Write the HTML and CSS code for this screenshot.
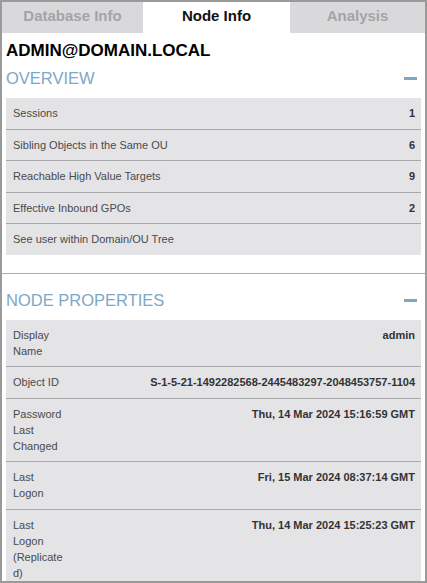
FILE: index.html
```html
<!DOCTYPE html>
<html lang="en">
<head>
  <meta charset="UTF-8" />
  <title>Node Info</title>
  <link rel="stylesheet" href="styles.css">
</head>
<body>
  <div class="panel">
    <div class="tabs">
      <div class="tab">Database Info</div>
      <div class="tab active">Node Info</div>
      <div class="tab">Analysis</div>
    </div>

    <div class="section first">
      <h1 class="node-name">ADMIN@DOMAIN.LOCAL</h1>
      <div class="section-head">
        <h2>OVERVIEW</h2>
        <span class="collapse"></span>
      </div>
      <div class="rows">
        <div class="row"><span>Sessions</span><b>1</b></div>
        <div class="row"><span>Sibling Objects in the Same OU</span><b>6</b></div>
        <div class="row"><span>Reachable High Value Targets</span><b>9</b></div>
        <div class="row"><span>Effective Inbound GPOs</span><b>2</b></div>
        <div class="row"><span>See user within Domain/OU Tree</span></div>
      </div>
    </div>

    <div class="section">
      <div class="section-head">
        <h2>NODE PROPERTIES</h2>
        <span class="collapse"></span>
      </div>
      <div class="rows">
        <div class="row prop"><span class="label">Display Name</span><b>admin</b></div>
        <div class="row prop"><span class="label">Object ID</span><b>S-1-5-21-1492282568-2445483297-2048453757-1104</b></div>
        <div class="row prop"><span class="label">Password Last Changed</span><b>Thu, 14 Mar 2024 15:16:59 GMT</b></div>
        <div class="row prop"><span class="label">Last Logon</span><b>Fri, 15 Mar 2024 08:37:14 GMT</b></div>
        <div class="row prop"><span class="label">Last Logon (Replicated)</span><b>Thu, 14 Mar 2024 15:25:23 GMT</b></div>
      </div>
    </div>
  </div>
</body>
</html>
```

FILE: styles.css
```css
body {
  margin: 0;
  font-family: 'Liberation Sans', Arial, sans-serif;
  background: #ffffff;
  color: #333333;
}

.panel {
  height: 583px;
  box-sizing: border-box;
  border: 2px solid #9a9a9a;
  overflow: hidden;
}

.tabs {
  display: grid;
  grid-template-columns: 141px 147px 1fr;
  height: 31px;
}

.tab {
  background-color: #d9d9db;
  color: #a4a4a7;
  font-weight: bold;
  font-size: 15px;
  display: flex;
  align-items: center;
  justify-content: center;
  padding-bottom: 4px;
}

.tab.active {
  background-color: #ffffff;
  color: #111111;
}

.section {
  padding: 17px 4px 0;
  border-top: 1px solid #ababab;
}

.section.first {
  padding: 8px 4px 18px;
  border-top: none;
}

.node-name {
  margin: 0 0 8px;
  font-size: 17px;
  color: #000000;
}

.section-head {
  display: flex;
  justify-content: space-between;
  align-items: center;
  margin-bottom: 10px;
}

.section-head h2 {
  margin: 0;
  font-size: 16.5px;
  font-weight: normal;
  color: #7ea7c6;
}

.collapse {
  width: 13px;
  height: 3px;
  margin-right: 4px;
  background-color: #7ea7c6;
}

.rows {
  background-color: #e4e4e7;
}

.row {
  display: flex;
  justify-content: space-between;
  align-items: flex-start;
  gap: 10px;
  padding: 7px 6px 7.5px 7px;
  font-size: 11px;
  line-height: 16px;
  color: #4a4a4a;
  border-bottom: 1px solid #a9a9ab;
}

.row:last-child {
  border-bottom: none;
}

.row b {
  color: #333333;
  text-align: right;
}

.prop .label {
  width: 52px;
  flex-shrink: 0;
  overflow-wrap: anywhere;
}
```
